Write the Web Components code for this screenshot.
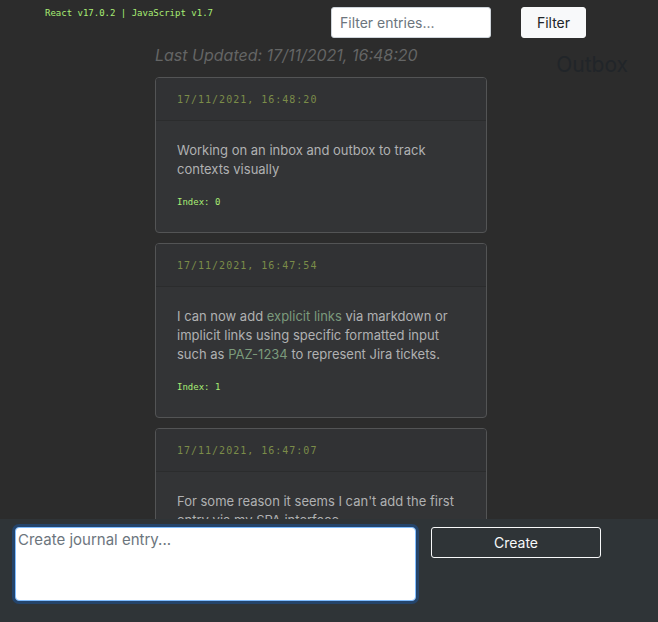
<!DOCTYPE html>
<html lang="en">
<head>
<meta charset="utf-8">
<meta name="viewport" content="width=device-width, initial-scale=1">
<title>Journal</title>
<style>
html { height: 100%; }
body { margin: 0; height: 100%; background: #2c2c2c; color: #212529; font: 16px/24px Inter, "Liberation Sans", sans-serif; --mono: "DejaVu Sans Mono", "Liberation Mono", monospace; }
</style>
</head>
<body>
<journal-app></journal-app>
<script>
const define = (name, markup, setup) => {
  const template = document.createElement('template');
  template.innerHTML = markup;
  customElements.define(name, class extends HTMLElement {
    constructor() {
      super();
      this.attachShadow({ mode: 'open' }).append(template.content.cloneNode(true));
    }
    connectedCallback() { if (setup) setup(this, this.shadowRoot); }
  });
};

define('journal-header', `
<style>
:host { display: flex; align-items: flex-start; padding: 7px 72px 5px 45px; }
.version { flex: 1; font: 9px/12px var(--mono); color: #a8ec74; }
form { display: flex; gap: 30px; }
input, button { box-sizing: border-box; height: 31px; border-radius: 3px; font: 14px/21px Inter, "Liberation Sans", sans-serif; }
input { width: 160px; padding: 4px 8px; border: 1px solid #ced4da; background: #fff; color: #495057; }
input::placeholder { color: #6c757d; opacity: 1; }
button { width: 65px; padding: 4px 8px; border: 1px solid #f8f9fa; background: #f8f9fa; color: #212529; }
</style>
<div class="version"><slot></slot></div>
<form onsubmit="return false">
  <input type="text" placeholder="Filter entries..." aria-label="Filter entries">
  <button type="submit">Filter</button>
</form>`);

define('journal-entry', `
<style>
:host { display: block; border: 1px solid #535455; border-radius: 4px; background: #333436; color: #b0b1b2; }
header { padding: 13px 21px 11px; border-bottom: 1px solid #2b2c2d; border-radius: 3px 3px 0 0; background: #313234; font: 10px/18px var(--mono); letter-spacing: 1px; color: #7b8c49; }
.body { padding: 20px 21px; font-size: 13px; line-height: 19px; }
p { margin: 0 0 16px; }
.index { font: 9px/14px var(--mono); padding-bottom: 3px; color: #a8ec74; }
::slotted(a) { color: #7b9a7c; text-decoration: none; }
</style>
<header><time></time></header>
<div class="body"><p><slot></slot></p><div class="index"></div></div>`,
(host, root) => {
  root.querySelector('time').textContent = host.getAttribute('time');
  root.querySelector('.index').textContent = 'Index: ' + host.getAttribute('index');
});

define('journal-composer', `
<style>
:host { display: grid; grid-template-columns: 401fr 170fr; column-gap: 15px; align-items: start; padding: 8px 57px 21px 15px; background: #2f3437; }
textarea { box-sizing: border-box; display: block; width: 100%; height: 74px; padding: 1px 2px; border: 1px solid #80bdff; border-radius: 4px; box-shadow: 0 0 0 3px #24446b; background: #fff; color: #495057; font: 15px/22px Inter, "Liberation Sans", sans-serif; resize: none; outline: 0; }
textarea::placeholder { color: #6c757d; opacity: 1; }
button { box-sizing: border-box; height: 31px; padding: 4px 8px; border: 1px solid #f8f9fa; border-radius: 3px; background: transparent; color: #f8f9fa; font: 14px/21px Inter, "Liberation Sans", sans-serif; }
</style>
<textarea placeholder="Create journal entry..." aria-label="Create journal entry"></textarea>
<button type="button">Create</button>`);

define('journal-app', `
<style>
:host { display: flex; flex-direction: column; height: 100%; overflow: hidden; }
main { flex: 1; min-height: 0; overflow: hidden; display: grid; grid-template-columns: 155fr 332fr 171fr; align-items: start; }
.inbox { grid-column: 2; display: grid; gap: 10px; }
.updated { margin: 0; font-size: 16px; line-height: 24px; font-style: italic; color: #646565; }
h2 { margin: 9px 30px 0 0; text-align: right; font-size: 21px; line-height: 26px; font-weight: 400; color: #212529; }
</style>
<journal-header>React v17.0.2 | JavaScript v1.7</journal-header>
<main>
  <section class="inbox">
    <p class="updated">Last Updated: 17/11/2021, 16:48:20</p>
    <journal-entry time="17/11/2021, 16:48:20" index="0">Working on an inbox and outbox to track contexts visually</journal-entry>
    <journal-entry time="17/11/2021, 16:47:54" index="1">I can now add <a href="#links">explicit links</a> via markdown or implicit links using specific formatted input such as <a href="#PAZ-1234">PAZ-1234</a> to represent Jira tickets.</journal-entry>
    <journal-entry time="17/11/2021, 16:47:07" index="2">For some reason it seems I can't add the first entry via my SPA interface.</journal-entry>
  </section>
  <h2>Outbox</h2>
</main>
<journal-composer></journal-composer>`);
</script>
</body>
</html>
